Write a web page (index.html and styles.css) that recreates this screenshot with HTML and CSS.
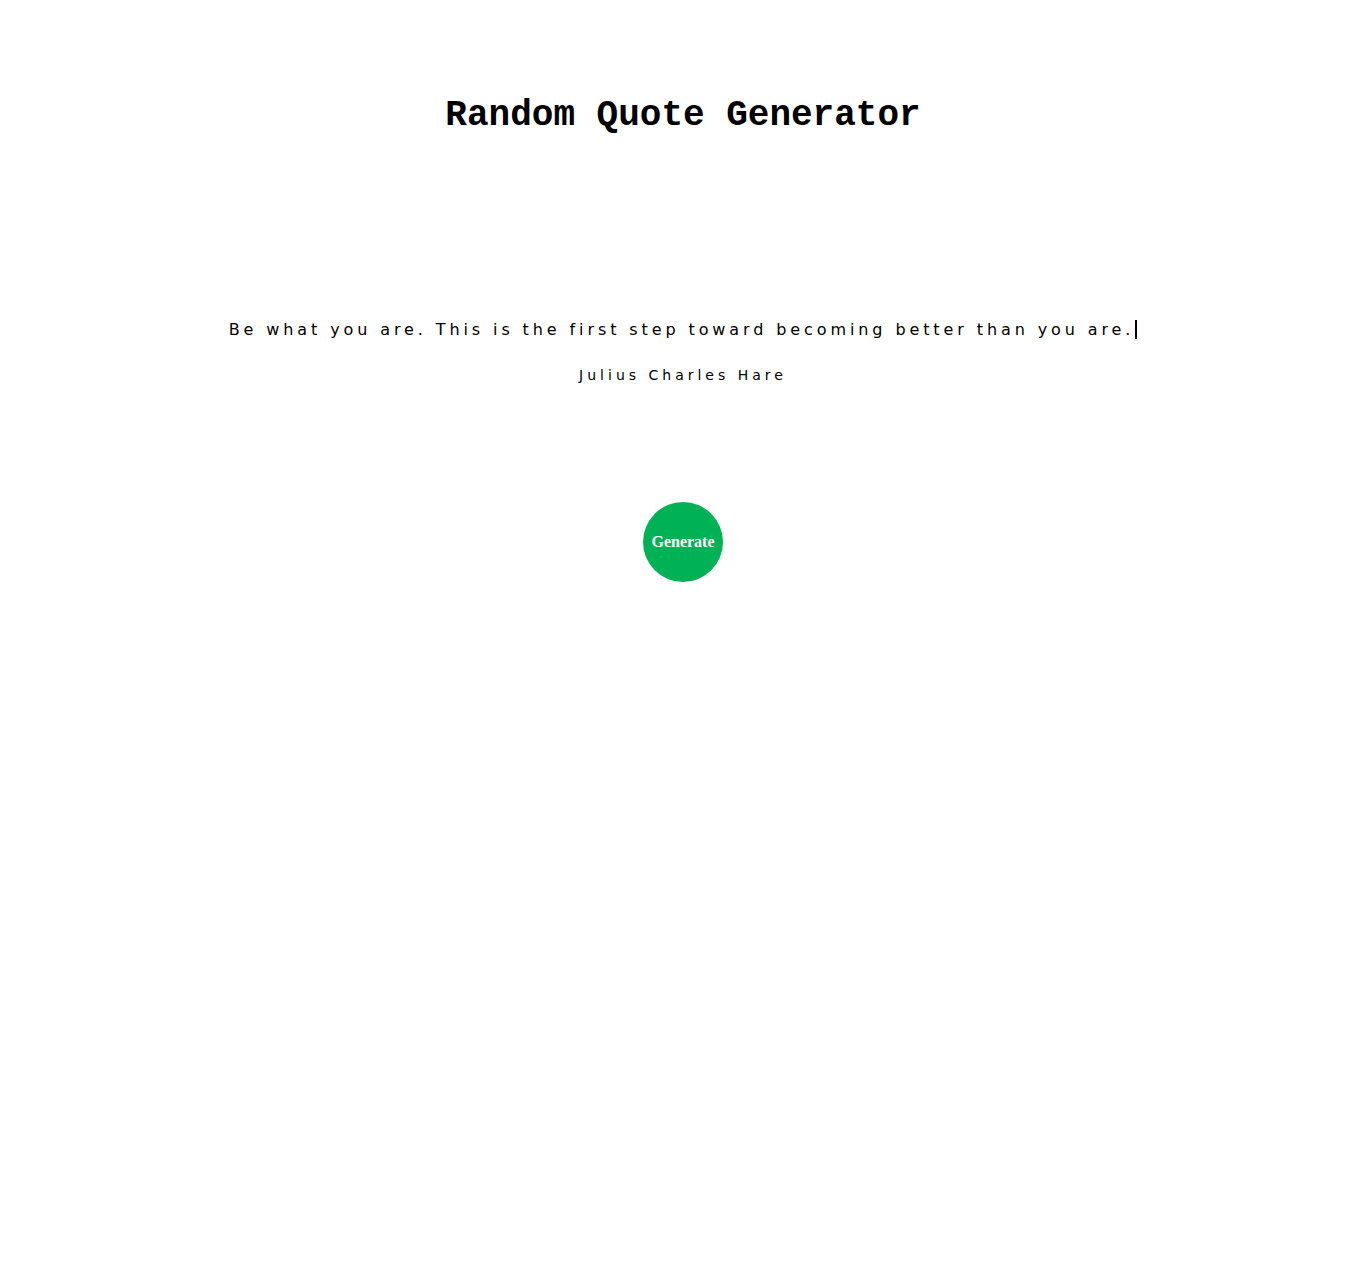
FILE: index.html
```html
<!DOCTYPE html>
<html>
<head>
<meta charset="utf-8">
<link rel="stylesheet" href="styles.css">
<title>Random Quote Generator</title>
</head>
<body>
<main class="app">
  <h1 class="title">Random Quote Generator</h1>
  <section class="quote-box">
    <p class="quote"><span class="quote-text">Be what you are. This is the first step toward becoming better than you are.</span></p>
    <p class="author">Julius Charles Hare</p>
  </section>
  <div class="actions">
    <button class="generate">Generate</button>
  </div>
</main>
</body>
</html>
```
FILE: styles.css
```css
html, body {
  margin: 0;
  padding: 0;
  background: #ffffff;
}
.app {
  display: flex;
  flex-direction: column;
  align-items: center;
  padding-top: 95px;
}
.title {
  margin: 0;
  font-family: "Liberation Mono", "DejaVu Sans Mono", monospace;
  font-weight: bold;
  font-size: 36px;
  line-height: 42px;
  color: #000;
  letter-spacing: 0;
}
.quote-box {
  margin-top: 182px;
  display: flex;
  flex-direction: column;
  align-items: center;
}
.quote {
  margin: 0;
  font-family: "DejaVu Sans", sans-serif;
  font-size: 16px;
  line-height: 22px;
  letter-spacing: 3.9px;
  color: #000;
}
.quote-text {
  border-right: 2px solid #000;
  padding-right: 1px;
}
.author {
  margin: 25px 0 0;
  font-family: "DejaVu Sans", sans-serif;
  font-size: 14px;
  line-height: 18px;
  letter-spacing: 4px;
  color: #000;
}
.actions {
  margin-top: 118px;
}
.generate {
  width: 80px;
  height: 80px;
  border-radius: 50%;
  border: none;
  background: #00b156;
  color: #fff;
  font-family: "Liberation Serif", "Times New Roman", serif;
  font-weight: bold;
  font-size: 16px;
  padding: 0;
  cursor: pointer;
}
```
